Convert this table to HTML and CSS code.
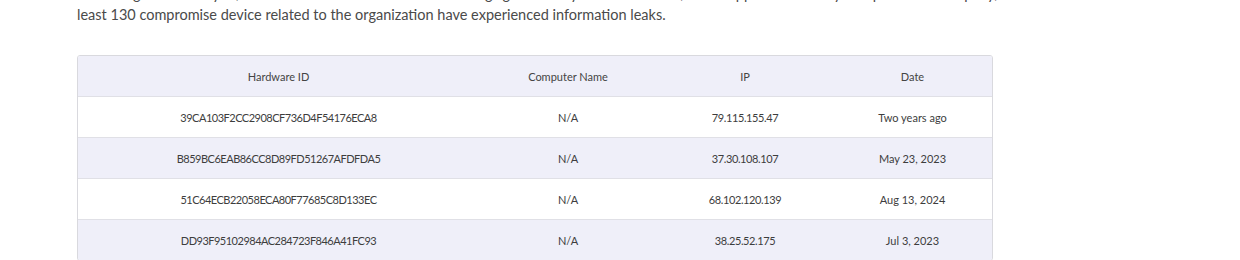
FILE: index.html
```html
<!DOCTYPE html>
<html lang="en">
<head>
<meta charset="utf-8">
<link rel="stylesheet" href="styles.css">
</head>
<body>
<div class="page">
  <p class="intro"><span class="line">According to our analysis, the domain was found in infostealer logs gathered by our threat team, which appeared in many dumps for the company, at</span><span class="line">least 130 compromise device related to the organization have experienced information leaks.</span></p>
  <div class="table-wrap">
    <table class="leaks">
      <colgroup>
        <col class="c1"><col class="c2"><col class="c3"><col class="c4">
      </colgroup>
      <thead>
        <tr><th>Hardware ID</th><th>Computer Name</th><th>IP</th><th>Date</th></tr>
      </thead>
      <tbody>
        <tr><td class="hw">39CA103F2CC2908CF736D4F54176ECA8</td><td>N/A</td><td class="ip">79.115.155.47</td><td>Two years ago</td></tr>
        <tr><td class="hw">B859BC6EAB86CC8D89FD51267AFDFDA5</td><td>N/A</td><td class="ip">37.30.108.107</td><td>May 23, 2023</td></tr>
        <tr><td class="hw">51C64ECB22058ECA80F77685C8D133EC</td><td>N/A</td><td class="ip">68.102.120.139</td><td>Aug 13, 2024</td></tr>
        <tr><td class="hw">DD93F95102984AC284723F846A41FC93</td><td>N/A</td><td class="ip">38.25.52.175</td><td>Jul 3, 2023</td></tr>
      </tbody>
    </table>
  </div>
</div>
</body>
</html>
```
FILE: styles.css
```css
html, body {
  margin: 0;
  padding: 0;
  background: #ffffff;
}
body {
  font-family: Lato, "Open Sans", "Liberation Sans", sans-serif;
  overflow: hidden;
}
.page {
  width: 916px;
  padding-left: 77px;
}
.intro {
  margin: -17px 0 0 0;
  width: 920px;
  font-size: 14.5px;
  line-height: 21px;
  color: #4a4a4a;
}
.intro .line {
  display: block;
  white-space: nowrap;
}
.table-wrap {
  margin-top: 30px;
  border: 1px solid #d9d9de;
  border-radius: 3px;
  overflow: hidden;
  width: 914px;
}
.leaks {
  width: 914px;
  border-collapse: collapse;
  table-layout: fixed;
  font-size: 11px;
  color: #3d3d3d;
}
.c1 { width: 401px; }
.c2 { width: 178px; }
.c3 { width: 176px; }
.c4 { width: 159px; }
.leaks th, .leaks td {
  height: 40px;
  padding: 0;
  text-align: center;
  vertical-align: middle;
  font-weight: 400;
}
.leaks th {
  background: #efeff9;
  color: #444;
}
.leaks td {
  border-top: 1px solid #e0e0e6;
}
.leaks td.hw {
  letter-spacing: -0.5px;
}
.leaks td.ip {
  letter-spacing: -0.4px;
}
.leaks tbody tr:nth-child(even) td {
  background: #efeff9;
}
```
